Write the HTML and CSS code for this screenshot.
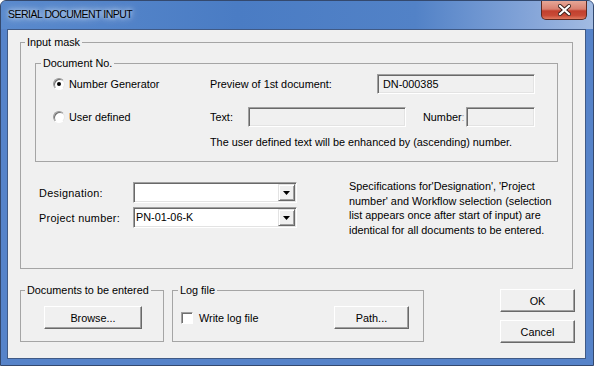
FILE: index.html
```html
<!DOCTYPE html>
<html lang="en">
<head>
  <meta charset="UTF-8">
  <title>Serial Document Input</title>
  <link rel="stylesheet" href="styles.css">
</head>
<body>
  <div class="window">
    <div class="titlebar">
      <span class="title">SERIAL DOCUMENT INPUT</span>
      <button class="close-btn" title="Close">
        <svg width="13" height="12" viewBox="0 0 13 12">
          <path d="M2 2 L11 10 M11 2 L2 10" stroke="#3a1f1a" stroke-width="4" stroke-linecap="square" fill="none"/>
          <path d="M2 2 L11 10 M11 2 L2 10" stroke="#fff" stroke-width="2.2" stroke-linecap="square" fill="none"/>
        </svg>
      </button>
    </div>

    <div class="client">
      <fieldset class="group group-mask">
        <legend>Input mask</legend>

        <fieldset class="group group-docno">
          <legend>Document No.</legend>
          <div class="row row-gen">
            <label class="option"><span class="radio checked"></span>Number Generator</label>
            <span class="lbl lbl-preview">Preview of 1st document:</span>
            <div class="textbox tb-preview">DN-000385</div>
          </div>
          <div class="row row-user">
            <label class="option"><span class="radio"></span>User defined</label>
            <span class="lbl lbl-text">Text:</span>
            <div class="textbox tb-text"></div>
            <span class="lbl lbl-number">Number<span class="dim">:</span></span>
            <div class="textbox tb-number"></div>
          </div>
          <p class="hint">The user defined text will be enhanced by (ascending) number.</p>
        </fieldset>

        <div class="specs">
          <div class="spec-fields">
            <div class="field-row">
              <span class="field-label">Designation:</span>
              <div class="combo">
                <span class="combo-value"></span>
                <span class="combo-btn"><svg width="7" height="4" viewBox="0 0 7 4"><polygon points="0,0 7,0 3.5,4" fill="#000"/></svg></span>
              </div>
            </div>
            <div class="field-row">
              <span class="field-label">Project number:</span>
              <div class="combo">
                <span class="combo-value">PN-01-06-K</span>
                <span class="combo-btn"><svg width="7" height="4" viewBox="0 0 7 4"><polygon points="0,0 7,0 3.5,4" fill="#000"/></svg></span>
              </div>
            </div>
          </div>
          <p class="spec-note">Specifications for'Designation', 'Project<br>number' and Workflow selection (selection<br>list appears once after start of input) are<br>identical for all documents to be entered.</p>
        </div>
      </fieldset>

      <div class="bottom">
        <fieldset class="group group-docs">
          <legend>Documents to be entered</legend>
          <button class="btn btn-browse">Browse...</button>
        </fieldset>

        <fieldset class="group group-log">
          <legend>Log file</legend>
          <div class="log-row">
            <span class="checkbox"></span>
            <span class="check-label">Write log file</span>
            <button class="btn btn-path">Path...</button>
          </div>
        </fieldset>

        <div class="dialog-btns">
          <button class="btn">OK</button>
          <button class="btn">Cancel</button>
        </div>
      </div>
    </div>
  </div>
</body>
</html>
```

FILE: styles.css
```css
    body {
      margin: 0;
      padding: 0;
      background: #fff;
      font-family: 'Liberation Sans', Arial, sans-serif;
      font-size: 10.85px;
      color: #000;
    }
    .window {
      width: 594px;
      height: 366px;
      box-sizing: border-box;
      border: 1px solid #34496e;
      border-radius: 6px 6px 0 0;
      background: #5683c9;
      padding: 0 7px 6px 6px;
      display: flex;
      flex-direction: column;
      overflow: hidden;
    }
    .titlebar {
      height: 28px;
      margin: 0 -7px 0 -6px;
      padding-left: 7px;
      display: flex;
      align-items: flex-start;
      background: linear-gradient(to right, #5a8acd 0%, #4a7cc4 40%, #5282c7 70%, #86a6d9 90%, #a2bbe2 100%);
    }
    .title {
      line-height: 27px;
      font-size: 10.5px;
      letter-spacing: -0.5px;
      color: #000;
      text-shadow: 0 0 8px #e4edf9, 0 0 4px #d6e3f5;
    }
    .close-btn {
      margin-left: auto;
      margin-right: 6px;
      width: 46px;
      height: 19px;
      padding: 0;
      border: 1px solid #5c2a22;
      border-top: none;
      border-radius: 0 0 5px 5px;
      background: linear-gradient(to bottom, #e6a797 0%, #d98070 45%, #c2402e 55%, #c84a36 80%, #e07a60 100%);
      display: flex;
      align-items: center;
      justify-content: center;
    }
    .client {
      flex: 1;
      border: 1px solid #405a86;
      background: #f0f0f0;
      display: flex;
      flex-direction: column;
    }

    /* group boxes */
    .group {
      margin: 0;
      padding: 0;
      border: 1px solid #a5a5a5;
      min-inline-size: 0;
    }
    .group legend {
      padding: 0 2px;
      margin-left: 4px;
      line-height: 13px;
      font-size: 10.85px;
    }
    .group-mask {
      margin: 6px 12px 0 12px;
    }
    .group-docno {
      margin: 8px 14px 0 14px;
      padding: 0 0 12px 0;
    }
    .group-docno legend {
      margin-left: 5px;
    }

    .row {
      display: flex;
      align-items: center;
      height: 20px;
      margin-left: 17px;
    }
    .row-gen {
      margin-top: 4px;
    }
    .row-user {
      margin-top: 13px;
    }
    .option {
      width: 157px;
      display: flex;
      align-items: center;
    }
    .radio {
      width: 12px;
      height: 12px;
      box-sizing: border-box;
      border-radius: 50%;
      background: #fff;
      border: 1px solid;
      border-color: #9a9a9a #e8e8e8 #fff #9a9a9a;
      box-shadow: inset 1px 1px 0 #6f6f6f;
      margin-right: 4px;
      display: flex;
      align-items: center;
      justify-content: center;
    }
    .radio.checked::after {
      content: "";
      width: 4px;
      height: 4px;
      border-radius: 50%;
      background: #000;
    }
    .lbl-preview {
      width: 167px;
    }
    .lbl-text {
      width: 38px;
    }
    .lbl-number {
      margin-left: 17px;
      width: 43px;
    }
    .dim {
      color: #a0a0a0;
    }
    .textbox {
      box-sizing: border-box;
      height: 20px;
      border: 1px solid;
      border-color: #a0a0a0 #fff #fff #a0a0a0;
      box-shadow: inset 1px 1px 0 #696969, inset -1px -1px 0 #e3e3e3;
      background: #f0f0f0;
      padding-left: 5px;
      line-height: 18px;
    }
    .tb-preview,
    .tb-text {
      width: 158px;
    }
    .tb-number {
      width: 69px;
    }
    .hint {
      margin: 8px 0 0 174px;
      line-height: 14px;
    }

    /* designation / project */
    .specs {
      margin-top: 20px;
      height: 86px;
      display: flex;
      align-items: flex-start;
    }
    .spec-fields {
      margin-left: 18px;
    }
    .field-row {
      display: flex;
      align-items: center;
      height: 21px;
    }
    .field-row + .field-row {
      margin-top: 4px;
    }
    .field-label {
      width: 94px;
      letter-spacing: 0.3px;
    }
    .combo {
      box-sizing: border-box;
      width: 164px;
      height: 21px;
      border: 1px solid;
      border-color: #a0a0a0 #fff #fff #a0a0a0;
      box-shadow: inset 1px 1px 0 #696969, inset -1px -1px 0 #e3e3e3;
      background: #fff;
      padding: 1px;
      display: flex;
    }
    .combo-value {
      flex: 1;
      padding-left: 1px;
      line-height: 17px;
    }
    .combo-btn {
      width: 17px;
      box-sizing: border-box;
      background: #f0f0f0;
      border: 1px solid;
      border-color: #e3e3e3 #696969 #696969 #e3e3e3;
      box-shadow: inset 1px 1px 0 #fff, inset -1px -1px 0 #a0a0a0;
      display: flex;
      align-items: center;
      justify-content: center;
    }
    .spec-note {
      margin: -3px 0 0 52px;
      line-height: 14.5px;
      white-space: nowrap;
    }

    /* bottom part */
    .bottom {
      margin-top: 15px;
      display: flex;
      align-items: flex-start;
    }
    .btn {
      box-sizing: border-box;
      width: 75px;
      height: 23px;
      padding: 0;
      background: #f0f0f0;
      border: 1px solid;
      border-color: #fff #696969 #696969 #fff;
      box-shadow: inset -1px -1px 0 #a0a0a0;
      font-family: 'Liberation Sans', Arial, sans-serif;
      font-size: 10.85px;
      color: #000;
    }
    .group-docs {
      margin-left: 12px;
      width: 144px;
      box-sizing: border-box;
      padding-bottom: 12px;
    }
    .btn-browse {
      margin: 9px 0 0 23px;
      width: 98px;
      display: block;
    }
    .group-log {
      margin-left: 8px;
      width: 252px;
      box-sizing: border-box;
      padding-bottom: 12px;
    }
    .group-log legend {
      margin-left: 5px;
    }
    .log-row {
      margin-top: 9px;
      height: 23px;
      display: flex;
      align-items: center;
    }
    .checkbox {
      margin-left: 8px;
      width: 12px;
      height: 12px;
      box-sizing: border-box;
      background: #fff;
      border: 1px solid;
      border-color: #a0a0a0 #fff #fff #a0a0a0;
      box-shadow: inset 1px 1px 0 #6f6f6f;
    }
    .check-label {
      margin-left: 6px;
    }
    .btn-path {
      margin-left: auto;
      margin-right: 14px;
    }
    .dialog-btns {
      margin: 5px 10px 0 auto;
      display: flex;
      flex-direction: column;
      gap: 8px;
    }
```
